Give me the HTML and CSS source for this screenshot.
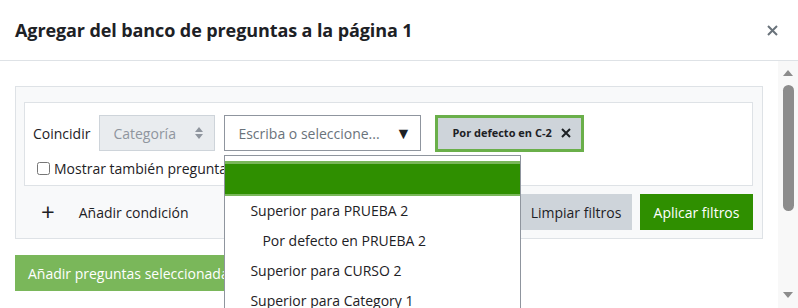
FILE: index.html
```html
<!DOCTYPE html>
<html lang="es">
<head>
    <meta charset="UTF-8">
    <meta name="viewport" content="width=device-width, initial-scale=1.0">
    <title>Agregar del banco de preguntas</title>
    <link rel="stylesheet" href="styles.css">
</head>
<body>
    <div class="modal">
        <div class="modal-header">
            <h5 class="modal-title">Agregar del banco de preguntas a la página 1</h5>
            <button class="btn-close" aria-label="Cerrar">
                <svg width="11" height="11" viewBox="0 0 11 11"><path d="M1 1L10 10M10 1L1 10" stroke="#6a737b" stroke-width="2"/></svg>
            </button>
        </div>

        <div class="modal-main">
            <div class="modal-body">
                <!-- Filtros -->
                <div class="filter-panel">
                    <div class="filter-box">
                        <div class="condition-row">
                            <span class="cond-label">Coincidir</span>
                            <div class="select-disabled">
                                <span>Categoría</span>
                                <svg width="8" height="12" viewBox="0 0 8 12"><path d="M4 0L8 5H0Z M4 12L0 7H8Z" fill="#8f959e"/></svg>
                            </div>
                            <div class="autocomplete">
                                <div class="auto-input">
                                    <span>Escriba o seleccione...</span>
                                    <span class="caret">▼</span>
                                </div>
                                <ul class="suggestions">
                                    <li class="active"></li>
                                    <li>Superior para PRUEBA 2</li>
                                    <li class="sub">Por defecto en PRUEBA 2</li>
                                    <li>Superior para CURSO 2</li>
                                    <li>Superior para Category 1</li>
                                </ul>
                            </div>
                            <span class="chip">Por defecto en C-2
                                <svg width="10" height="10" viewBox="0 0 10 10"><path d="M1 1L9 9M9 1L1 9" stroke="#1d2125" stroke-width="2"/></svg>
                            </span>
                        </div>
                        <label class="check"><input type="checkbox"> Mostrar también preguntas antiguas</label>
                    </div>
                    <div class="filter-actions">
                        <button class="btn-link"><span class="plus">+</span> Añadir condición</button>
                        <div class="action-buttons">
                            <button class="btn-secondary">Limpiar filtros</button>
                            <button class="btn-primary">Aplicar filtros</button>
                        </div>
                    </div>
                </div>

                <button class="btn-add" disabled>Añadir preguntas seleccionadas a la prueba</button>
            </div>

            <div class="scrollbar">
                <span class="arrow-up"></span>
                <span class="thumb"></span>
                <span class="arrow-down"></span>
            </div>
        </div>
    </div>
</body>
</html>
```

FILE: styles.css
```css
body {
    margin: 0;
    font-family: "Open Sans", "Noto Sans", sans-serif;
    font-size: 14px;
    color: #1d2125;
    background: #fff;
    height: 308px;
    overflow: hidden;
}
.modal {
    width: 798px;
}
.modal-header {
    height: 61px;
    box-sizing: border-box;
    display: flex;
    align-items: center;
    justify-content: space-between;
    padding: 0 20px 0 15px;
    border-bottom: 1px solid #dee2e6;
}
.modal-title {
    margin: 0;
    font-size: 18px;
    font-weight: 700;
    letter-spacing: -0.1px;
}
.btn-close {
    border: none;
    background: none;
    padding: 0;
    display: flex;
}
.modal-main {
    display: flex;
    height: 247px;
}
.modal-body {
    flex: 1;
    padding: 25px 15px 0 15px;
    position: relative;
}
.filter-panel {
    background: #f8f9fa;
    border: 1px solid #dee2e6;
    padding: 15px 9px 8px 8px;
}
.filter-box {
    background: #fff;
    border: 1px solid #dee2e6;
    height: 84px;
    box-sizing: border-box;
    padding: 12px 8px 0 8px;
}
.condition-row {
    display: flex;
    align-items: center;
    height: 36px;
}
.cond-label {
    margin-right: 9px;
}
.select-disabled {
    width: 116px;
    height: 36px;
    box-sizing: border-box;
    background: #e9ecef;
    border: 1px solid #ced4da;
    display: flex;
    align-items: center;
    justify-content: space-between;
    padding: 0 11px 0 13px;
    color: #8f959e;
    margin-right: 9px;
}
.autocomplete {
    position: relative;
    margin-right: 14px;
}
.auto-input {
    width: 197px;
    height: 36px;
    box-sizing: border-box;
    border: 1px solid #8f959e;
    display: flex;
    align-items: center;
    justify-content: space-between;
    padding: 0 9px 0 13px;
    color: #6a737b;
}
.caret {
    color: #1d2125;
    font-size: 16px;
}
.suggestions {
    position: absolute;
    top: 40px;
    left: 0;
    width: 297px;
    height: 200px;
    box-sizing: border-box;
    margin: 0;
    padding: 5px 0 0 0;
    list-style: none;
    background: #fff;
    border: 1px solid #8f959e;
    z-index: 5;
}
.suggestions li {
    height: 30px;
    line-height: 30px;
    padding-left: 25px;
    white-space: nowrap;
}
.suggestions li.active {
    height: 35px;
    background: #2f8f00;
    box-shadow: inset 0 3px 0 #7ab75a, inset 0 -2px 0 #7ab75a;
}
.suggestions li.sub {
    padding-left: 37px;
}
.chip {
    height: 37px;
    box-sizing: border-box;
    display: flex;
    align-items: center;
    gap: 9px;
    padding: 0 10px 2px 14px;
    background: #ced4da;
    border: 3px solid #6aaf4a;
    font-size: 11px;
    font-weight: 700;
    margin-top: 1px;
}
.check {
    display: flex;
    align-items: center;
    gap: 4px;
    margin-top: 8px;
    padding-left: 4px;
}
.check input {
    margin: 0;
    width: 13px;
    height: 13px;
}
.filter-actions {
    display: flex;
    justify-content: space-between;
    align-items: center;
    margin-top: 8px;
}
.btn-link {
    border: none;
    background: none;
    font: inherit;
    color: #1d2125;
    padding: 0 0 0 17px;
    display: flex;
    align-items: center;
}
.plus {
    font-size: 24px;
    font-weight: 400;
    margin-right: 24px;
    line-height: 1;
}
.action-buttons {
    display: flex;
    gap: 8px;
}
.btn-secondary,
.btn-primary {
    height: 36px;
    border: none;
    font: inherit;
    padding: 0;
    white-space: nowrap;
}
.btn-secondary {
    background: #ced4da;
    color: #1d2125;
    width: 112px;
}
.btn-primary {
    background: #2f8f00;
    color: #fff;
    width: 113px;
}
.btn-add {
    margin-top: 16px;
    height: 36px;
    border: none;
    font: inherit;
    background: #7ab75a;
    color: #fff;
    padding: 0 13px;
}
.scrollbar {
    width: 20px;
    background: #f8f8f8;
    display: flex;
    flex-direction: column;
    align-items: center;
}
.arrow-up {
    margin-top: 9px;
    border-left: 5px solid transparent;
    border-right: 5px solid transparent;
    border-bottom: 6px solid #8c8c8c;
}
.thumb {
    margin-top: 9px;
    width: 11px;
    height: 126px;
    border-radius: 6px;
    background: #8c8c8c;
}
.arrow-down {
    margin-top: auto;
    margin-bottom: 10px;
    border-left: 5px solid transparent;
    border-right: 5px solid transparent;
    border-top: 6px solid #8c8c8c;
}
```
